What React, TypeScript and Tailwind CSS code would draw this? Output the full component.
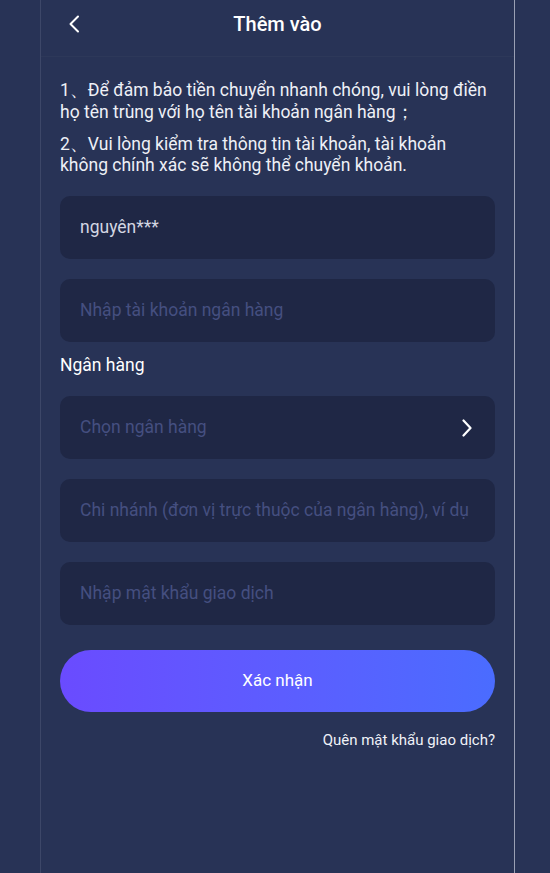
import React from "react";

function Field({ text, placeholder = true, chevron = false }: { text: string; placeholder?: boolean; chevron?: boolean }) {
  return (
    <div className="h-[63px] rounded-[10px] bg-[#1f2745] flex items-center pl-[20px] pr-[22px]">
      <span className={`flex-1 whitespace-nowrap overflow-hidden text-[17.5px] ${placeholder ? "text-[#454f80]" : "text-[#d3d6e2]"}`}>{text}</span>
      {chevron && (
        <svg width="12" height="18" viewBox="0 0 12 18" fill="none">
          <path d="M2.5 1.5 L9.5 9 L2.5 16.5" stroke="#ffffff" strokeWidth="2.2" strokeLinecap="round" strokeLinejoin="round" />
        </svg>
      )}
    </div>
  );
}

export default function App() {
  return (
    <div className="min-h-[873px] w-[550px] bg-[#283356] flex" style={{ fontFamily: "Roboto, 'Noto Sans', sans-serif" }}>
      <div className="ml-[40px] w-[475px] min-h-[873px] border-l border-l-[#3d4768] border-r border-r-[#9aa0b4] flex flex-col">
        <div className="h-[57px] flex items-center relative border-b border-b-[#2d3859]">
          <div className="absolute left-[26px] top-[15px]">
            <svg width="14" height="18" viewBox="0 0 14 18" fill="none">
              <path d="M11 1.5 L3.5 9 L11 16.5" stroke="#ffffff" strokeWidth="2" strokeLinecap="round" strokeLinejoin="round" />
            </svg>
          </div>
          <div className="flex-1 text-center text-white text-[20px] font-medium pb-[15px] pt-[6px]">Thêm vào</div>
        </div>
        <div className="px-[19px] pt-[22px] flex flex-col">
          <p className="text-[17.5px] leading-[22px] text-[#eef0f6]">1、Để đảm bảo tiền chuyển nhanh chóng, vui lòng điền họ tên trùng với họ tên tài khoản ngân hàng；</p>
          <p className="mt-[11px] text-[17.5px] leading-[21px] text-[#eef0f6]">2、Vui lòng kiểm tra thông tin tài khoản, tài khoản không chính xác sẽ không thể chuyển khoản.</p>
          <div className="mt-[20px] flex flex-col gap-[20px]">
            <Field text="nguyên***" placeholder={false} />
            <Field text="Nhập tài khoản ngân hàng" />
          </div>
          <div className="mt-[12px] mb-[20px] h-[22px] text-[17.5px] leading-[22px] text-white">Ngân hàng</div>
          <div className="flex flex-col gap-[20px]">
            <Field text="Chọn ngân hàng" chevron />
            <Field text="Chi nhánh (đơn vị trực thuộc của ngân hàng), ví dụ" />
            <Field text="Nhập mật khẩu giao dịch" />
          </div>
          <button className="mt-[25px] h-[62px] rounded-full bg-gradient-to-r from-[#6a4bff] to-[#4a6cff] text-white text-[17px] flex items-center justify-center">Xác nhận</button>
          <div className="mt-[17px] text-right text-[15px] text-[#f0f2f8]">Quên mật khẩu giao dịch?</div>
        </div>
      </div>
    </div>
  );
}
